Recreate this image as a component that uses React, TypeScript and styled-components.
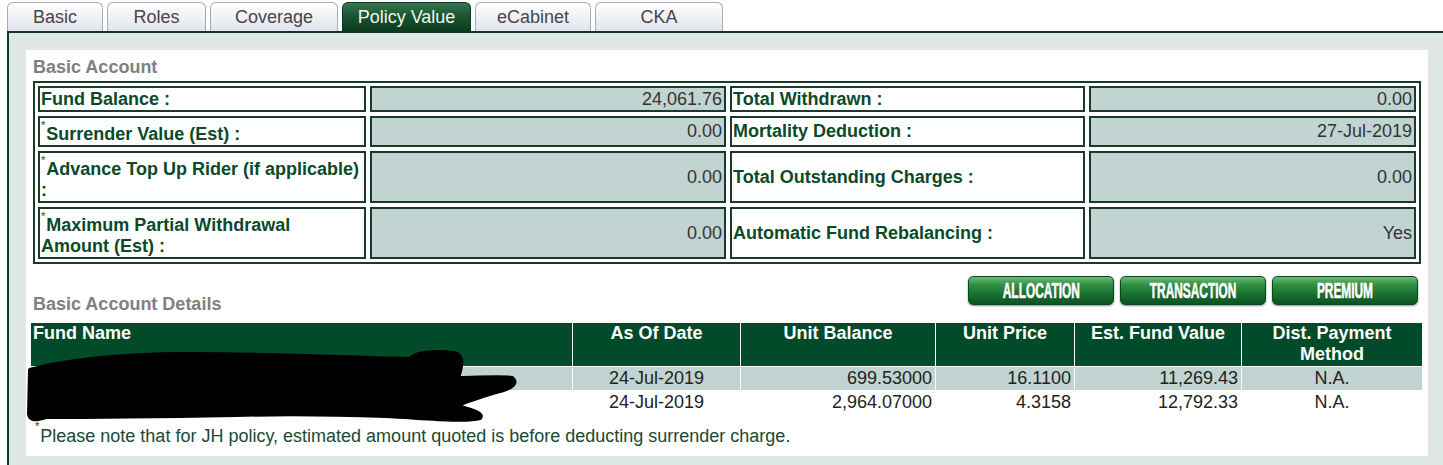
import React from "react";
import styled, { createGlobalStyle, css } from "styled-components";

const GlobalStyle = createGlobalStyle`
  html, body { margin: 0; padding: 0; background: #ffffff; }
  body { font-family: "Liberation Sans", Arial, sans-serif; overflow: hidden; }
  * { box-sizing: border-box; }
`;

const Page = styled.div`
  width: 1443px;
  height: 465px;
  padding-left: 7px;
  overflow: hidden;
`;

const TabBar = styled.div`
  display: flex;
  gap: 4px;
  height: 31px;
  padding-top: 2px;
`;

const Tab = styled.div<{ $w: number; $active?: boolean }>`
  width: ${(p) => p.$w}px;
  height: 29px;
  border: 1px solid #a7aab8;
  border-bottom: none;
  border-radius: 6px 6px 0 0;
  background: linear-gradient(to bottom, #ffffff 0%, #f1f1f6 50%, #e2e3ed 100%);
  color: #464646;
  font-size: 18px;
  line-height: 28px;
  text-align: center;
  ${(p) =>
    p.$active &&
    css`
      border-color: #0b3a1f;
      background: linear-gradient(to bottom, #3a7652 0%, #1a5533 45%, #0a3a1d 100%);
      color: #eef7ee;
    `}
`;

const Panel = styled.div`
  border-top: 2px solid #0e3a25;
  border-left: 2px solid #0e3a25;
  background: #dfe8e4;
  padding: 17px 15px 10px 17px;
`;

const Card = styled.div`
  position: relative;
  background: #ffffff;
  padding: 6px 6px 9px 5px;
`;

const SectionTitle = styled.div`
  font-size: 18px;
  font-weight: bold;
  color: #808080;
  line-height: 22px;
  padding-left: 2px;
`;

const InfoGrid = styled.div`
  box-sizing: content-box;
  margin: 3px 0 0 2px;
  width: 1378px;
  border: 2px solid #1c3a2b;
  padding: 3px;
  display: grid;
  grid-template-columns: 328px 356px 355px 327px;
  grid-template-rows: 26px 31px 52px 52px;
  gap: 4px;
`;

const Cell = styled.div<{ $value?: boolean; $starred?: boolean }>`
  border: 2px solid #1c3a2b;
  display: flex;
  align-items: center;
  font-size: 18px;
  line-height: 21px;
  ${(p) =>
    p.$value
      ? css`
          background: #c1d4d1;
          color: #333333;
          justify-content: flex-end;
          padding: 0 2px 0 0;
        `
      : css`
          background: #ffffff;
          color: #0b4a29;
          font-weight: bold;
          padding: ${p.$starred ? "5px 1px 0 1px" : "0 1px"};
        `}
`;

const Star = styled.span`
  display: inline-block;
  font-size: 11px;
  font-weight: normal;
  color: #333;
  line-height: 11px;
  vertical-align: top;
  margin-top: -4px;
  margin-right: 1px;
`;

const ActionRow = styled.div`
  display: flex;
  justify-content: space-between;
  margin-top: 12px;
  min-height: 47px;
`;

const BottomTitle = styled(SectionTitle)`
  align-self: flex-end;
  margin-bottom: 8px;
`;

const ButtonGroup = styled.div`
  display: flex;
  gap: 6px;
  margin-right: 4px;
  align-self: flex-start;
`;

const ActionButton = styled.button`
  width: 146px;
  height: 29px;
  padding: 0;
  border: 1px solid #0b471d;
  border-radius: 5px;
  background: linear-gradient(to bottom, #6cb877 0%, #2f8f44 30%, #17702f 65%, #0c5322 100%);
  box-shadow: 0 1px 2px rgba(0, 0, 0, 0.45);
  color: #ffffff;
  font-family: "Liberation Sans", Arial, sans-serif;
  font-weight: bold;
  font-size: 22px;
  line-height: 27px;
  overflow: hidden;
  display: flex;
  align-items: center;
  justify-content: center;
`;

const Condensed = styled.span`
  display: inline-block;
  transform: scaleX(0.54);
  white-space: nowrap;
  -webkit-text-stroke: 0.7px #ffffff;
  text-shadow: 0 1px 1px rgba(0, 0, 0, 0.35);
`;

const FundTable = styled.table`
  width: 1391px;
  border-collapse: separate;
  border-spacing: 0;
  table-layout: fixed;
  font-size: 18px;
`;

const HeadCell = styled.th<{ $w: number; $left?: boolean }>`
  width: ${(p) => p.$w}px;
  background: #014a2a;
  color: #ffffff;
  font-weight: bold;
  line-height: 21px;
  height: 44px;
  vertical-align: top;
  text-align: ${(p) => (p.$left ? "left" : "center")};
  padding: 0 2px;
  border-bottom: 1px solid #ffffff;
  border-left: ${(p) => (p.$left ? "none" : "1px solid #ffffff")};
`;

const DataCell = styled.td<{ $align: "left" | "right" | "center"; $shaded?: boolean; $first?: boolean }>`
  background: ${(p) => (p.$shaded ? "#c1d4d1" : "#ffffff")};
  color: #222222;
  line-height: 23px;
  height: 24px;
  padding: 0 3px;
  text-align: ${(p) => p.$align};
  border-bottom: 1px solid #ffffff;
  border-left: ${(p) => (p.$first ? "none" : "1px solid #ffffff")};
  white-space: nowrap;
`;

const Footnote = styled.div`
  margin-top: 10px;
  font-size: 18px;
  line-height: 22px;
  color: #1a4a34;
  padding-left: 4px;
`;

const Redaction = styled.svg`
  position: absolute;
  left: 0;
  top: 298px;
  pointer-events: none;
`;

const infoRows: { label: React.ReactNode; key: string; starred?: boolean; value: string; label2: string; value2: string }[] = [
  { key: "fb", label: "Fund Balance :", value: "24,061.76", label2: "Total Withdrawn :", value2: "0.00" },
  { key: "sv", label: "Surrender Value (Est) :", starred: true, value: "0.00", label2: "Mortality Deduction :", value2: "27-Jul-2019" },
  { key: "at", label: "Advance Top Up Rider (if applicable) :", starred: true, value: "0.00", label2: "Total Outstanding Charges :", value2: "0.00" },
  {
    key: "mp",
    label: (
      <>
        Maximum Partial Withdrawal
        <br />
        Amount (Est) :
      </>
    ),
    starred: true,
    value: "0.00",
    label2: "Automatic Fund Rebalancing :",
    value2: "Yes",
  },
];

const tabs = [
  { name: "Basic", w: 96 },
  { name: "Roles", w: 99 },
  { name: "Coverage", w: 128 },
  { name: "Policy Value", w: 129, active: true },
  { name: "eCabinet", w: 116 },
  { name: "CKA", w: 128 },
];

const heads = [
  { t: "Fund Name", w: 541, left: true },
  { t: "As Of Date", w: 168 },
  { t: "Unit Balance", w: 195 },
  { t: "Unit Price", w: 139 },
  { t: "Est. Fund Value", w: 167 },
  { t: "Dist. Payment Method", w: 181 },
];

const funds = [
  { date: "24-Jul-2019", units: "699.53000", price: "16.1100", value: "11,269.43", dist: "N.A." },
  { date: "24-Jul-2019", units: "2,964.07000", price: "4.3158", value: "12,792.33", dist: "N.A." },
];

export default function App() {
  return (
    <Page>
      <GlobalStyle />
      <TabBar>
        {tabs.map((t) => (
          <Tab key={t.name} $w={t.w} $active={t.active}>
            {t.name}
          </Tab>
        ))}
      </TabBar>
      <Panel>
        <Card>
          <SectionTitle>Basic Account</SectionTitle>
          <InfoGrid>
            {infoRows.map((r) => (
              <React.Fragment key={r.key}>
                <Cell $starred={r.starred}>
                  <span>
                    {r.starred && <Star>*</Star>}
                    {r.label}
                  </span>
                </Cell>
                <Cell $value>{r.value}</Cell>
                <Cell>{r.label2}</Cell>
                <Cell $value>{r.value2}</Cell>
              </React.Fragment>
            ))}
          </InfoGrid>
          <ActionRow>
            <BottomTitle>Basic Account Details</BottomTitle>
            <ButtonGroup>
              <ActionButton>
                <Condensed>ALLOCATION</Condensed>
              </ActionButton>
              <ActionButton>
                <Condensed>TRANSACTION</Condensed>
              </ActionButton>
              <ActionButton>
                <Condensed>PREMIUM</Condensed>
              </ActionButton>
            </ButtonGroup>
          </ActionRow>
          <FundTable>
            <thead>
              <tr>
                {heads.map((h) => (
                  <HeadCell key={h.t} $w={h.w} $left={h.left}>
                    {h.t}
                  </HeadCell>
                ))}
              </tr>
            </thead>
            <tbody>
              {funds.map((f, i) => (
                <tr key={i}>
                  <DataCell $align="left" $first $shaded={i === 0}></DataCell>
                  <DataCell $align="center" $shaded={i === 0}>{f.date}</DataCell>
                  <DataCell $align="right" $shaded={i === 0}>{f.units}</DataCell>
                  <DataCell $align="right" $shaded={i === 0}>{f.price}</DataCell>
                  <DataCell $align="right" $shaded={i === 0}>{f.value}</DataCell>
                  <DataCell $align="center" $shaded={i === 0}>{f.dist}</DataCell>
                </tr>
              ))}
            </tbody>
          </FundTable>
          <Footnote>
            <Star>*</Star>Please note that for JH policy, estimated amount quoted is before deducting surrender charge.
          </Footnote>
          <Redaction width="520" height="90" viewBox="0 0 520 90">
            <path
              d="M4 22 C 30 14, 90 6, 160 6 C 250 6, 330 10, 384 11 C 388 4, 410 3, 428 5 C 438 7, 436 18, 432 30 C 450 30, 478 28, 486 30 C 492 34, 488 40, 470 44 C 450 50, 438 54, 430 58 C 448 62, 458 66, 454 70 C 440 74, 400 70, 360 68 C 300 66, 250 66, 210 67 C 150 68, 80 69, 20 69 C 10 72, 4 73, 3 66 Z"
              fill="#000000"
              stroke="#000000"
              strokeWidth="4"
              strokeLinejoin="round"
            />
          </Redaction>
        </Card>
      </Panel>
    </Page>
  );
}
